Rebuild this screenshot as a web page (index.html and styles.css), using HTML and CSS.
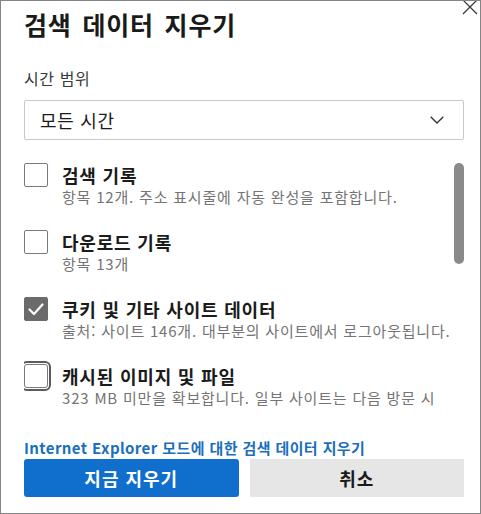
FILE: index.html
```html
<!DOCTYPE html>
<html lang="ko">
<head>
<meta charset="utf-8">
<title>검색 데이터 지우기</title>
<link rel="stylesheet" href="styles.css">
</head>
<body>
<div class="dialog">
  <button class="close" aria-label="닫기">
    <svg width="16" height="16" viewBox="0 0 16 16"><path d="M1 1 L15 15 M15 1 L1 15" stroke="#3a3a3a" stroke-width="1.3" fill="none"/></svg>
  </button>
  <h1 class="title">검색 데이터 지우기</h1>
  <div class="field-label">시간 범위</div>
  <div class="select">
    <span class="select-value">모든 시간</span>
    <svg class="chevron" width="14" height="8" viewBox="0 0 14 8"><path d="M0.7 0.7 L7 7 L13.3 0.7" stroke="#333" stroke-width="1.3" fill="none"/></svg>
  </div>
  <div class="list">
    <div class="items">
      <div class="item">
        <span class="box"></span>
        <div class="text">
          <div class="label">검색 기록</div>
          <div class="desc">항목 12개. 주소 표시줄에 자동 완성을 포함합니다.</div>
        </div>
      </div>
      <div class="item">
        <span class="box"></span>
        <div class="text">
          <div class="label">다운로드 기록</div>
          <div class="desc">항목 13개</div>
        </div>
      </div>
      <div class="item">
        <span class="box checked">
          <svg width="22" height="22" viewBox="0 0 22 22"><path d="M4.5 11.5 L9 16 L17.5 6.5" stroke="#fff" stroke-width="2.2" fill="none" stroke-linecap="round" stroke-linejoin="round"/></svg>
        </span>
        <div class="text">
          <div class="label">쿠키 및 기타 사이트 데이터</div>
          <div class="desc">출처: 사이트 146개. 대부분의 사이트에서 로그아웃됩니다.</div>
        </div>
      </div>
      <div class="item">
        <span class="box focused"></span>
        <div class="text">
          <div class="label">캐시된 이미지 및 파일</div>
          <div class="desc">323 MB 미만을 확보합니다. 일부 사이트는 다음 방문 시</div>
        </div>
      </div>
    </div>
    <div class="track"><div class="thumb"></div></div>
  </div>
  <a class="ie-link" href="#">Internet Explorer 모드에 대한 검색 데이터 지우기</a>
  <div class="actions">
    <button class="btn primary">지금 지우기</button>
    <button class="btn secondary">취소</button>
  </div>
</div>
</body>
</html>
```
FILE: styles.css
```css
* { box-sizing: border-box; }
html, body { margin: 0; padding: 0; background: #fff; }
body {
  font-family: "Noto Sans CJK KR", "Noto Sans", sans-serif;
  color: #1b1b1b;
}
.dialog {
  position: relative;
  width: 481px;
  height: 514px;
  border: 1px solid #858585;
  padding: 0 16px 0 23px;
  overflow: hidden;
  display: flex;
  flex-direction: column;
}
.close {
  position: absolute;
  top: -2px;
  left: 461px;
  width: 16px;
  height: 16px;
  padding: 0;
  border: 0;
  background: none;
}
.close svg { display: block; }
.title {
  margin: 6px 0 0;
  font-size: 25px;
  line-height: 34px;
  font-weight: 700;
  letter-spacing: 0.8px;
  word-spacing: 3px;
  color: #1a1a1a;
}
.field-label {
  margin-top: 26px;
  font-size: 16px;
  line-height: 22px;
  letter-spacing: 0.6px;
  color: #3a3a3a;
}
.select {
  margin-top: 11px;
  height: 40px;
  border: 1px solid #c9c9c9;
  border-radius: 2px;
  display: flex;
  align-items: center;
  justify-content: space-between;
  padding: 0 19px 0 15px;
}
.select-value { font-size: 18px; letter-spacing: 0.7px; color: #1b1b1b; }
.chevron { display: block; }
.list {
  margin-top: 11px;
  height: 259px;
  overflow: hidden;
  display: flex;
}
.items {
  flex: 1;
  padding-top: 12px;
  display: flex;
  flex-direction: column;
  gap: 23px;
}
.item {
  display: flex;
  align-items: flex-start;
  gap: 14px;
}
.box {
  flex: none;
  width: 24px;
  height: 24px;
  border: 1px solid #7a7a7a;
  border-radius: 2px;
  display: flex;
  align-items: center;
  justify-content: center;
}
.box.checked { background: #6b6b6b; border-color: #6b6b6b; }
.box.focused {
  outline: 2px solid #5c5c5c;
  outline-offset: 1px;
  border-radius: 3px;
}
.text { flex: 1; min-width: 0; }
.label {
  font-size: 18px;
  line-height: 24px;
  font-weight: 700;
  letter-spacing: 0.8px;
  color: #1b1b1b;
}
.desc {
  font-size: 15px;
  line-height: 20px;
  letter-spacing: 0.8px;
  color: #747474;
}
.track { flex: none; width: 10px; }
.thumb {
  margin-top: 12px;
  height: 101px;
  border-radius: 5px;
  background: #8a8a8a;
}
.ie-link {
  margin-top: 28px;
  font-size: 15px;
  line-height: 20px;
  font-weight: 600;
  letter-spacing: 0.4px;
  color: #1a6fbd;
  text-decoration: none;
}
.actions {
  margin-top: 1px;
  display: flex;
  gap: 11px;
}
.btn {
  flex: 1;
  height: 38px;
  border: 0;
  border-radius: 3px;
  font-family: inherit;
  font-size: 18px;
  font-weight: 700;
  letter-spacing: 1px;
}
.primary { background: #106ecd; color: #fff; }
.secondary { background: #e6e6e6; color: #1b1b1b; border-radius: 0; }
```
